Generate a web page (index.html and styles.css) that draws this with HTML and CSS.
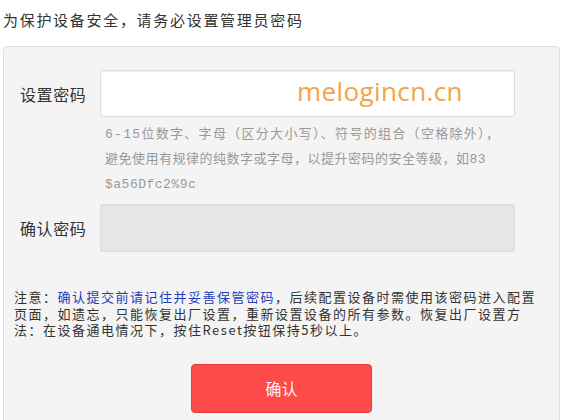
FILE: index.html
```html
<!DOCTYPE html>
<html lang="zh-CN">
<head>
    <meta charset="UTF-8">
    <title>设置管理员密码</title>
    <link rel="stylesheet" href="styles.css">
</head>
<body>
    <p class="tip">为保护设备安全，请务必设置管理员密码</p>

    <div class="panel">
        <div class="field">
            <label class="field-label">设置密码</label>
            <div class="field-box">
                <input class="text-input" type="password">
                <span class="watermark">melogincn.cn</span>
            </div>
        </div>

        <p class="hint"><span class="hint-wide">6-15位数字、字母（区分大小写）、符号的组合（空格除外），</span><br>避免使用有规律的纯数字或字母，以提升密码的安全等级，如83<br>$a56Dfc2%9c</p>

        <div class="field confirm">
            <label class="field-label">确认密码</label>
            <div class="field-box">
                <input class="text-input" type="password" disabled>
            </div>
        </div>

        <p class="note">注意：<span class="note-key">确认提交前请记住并妥善保管密码</span>，后续配置设备时需使用该密码进入配置<br>页面，如遗忘，只能恢复出厂设置，重新设置设备的所有参数。恢复出厂设置方<br>法：在设备通电情况下，按住Reset按钮保持5秒以上。</p>

        <div class="actions">
            <button class="btn-confirm" type="button">确认</button>
        </div>
    </div>
</body>
</html>
```

FILE: styles.css
```css
/* Basic reset */
* {
    margin: 0;
    padding: 0;
    box-sizing: border-box;
}

body {
    background-color: #fff;
    font-family: "Noto Sans CJK SC", "DejaVu Sans", sans-serif;
    color: #333;
}

/* Heading tip above the panel */
.tip {
    margin: 10px 0 0 3px;
    font-size: 15px;
    line-height: 20px;
    letter-spacing: 1.7px;
    color: #333;
}

/* Grey form panel */
.panel {
    margin: 16px 9px 0 3px;
    padding: 23px 0 30px;
    background-color: #f4f4f4;
    border: 1px solid #ddd;
    border-radius: 4px;
}

.field {
    display: flex;
    align-items: center;
    padding-left: 16px;
}

.field-label {
    width: 80px;
    font-size: 16px;
    letter-spacing: 0.6px;
    color: #333;
}

.field-box {
    position: relative;
}

.text-input {
    display: block;
    width: 415px;
    height: 47px;
    background-color: #fff;
    border: 1px solid #ddd;
    border-radius: 3px;
    box-shadow: inset 0 1px 2px rgba(0, 0, 0, 0.06);
    outline: none;
}

.text-input:disabled {
    background-color: #e6e6e6;
}

.confirm {
    margin-top: 7px;
}

.confirm .text-input {
    height: 48px;
}

/* Site watermark laid over the first input */
.watermark {
    position: absolute;
    left: 197px;
    top: 4px;
    font-family: "Open Sans", sans-serif;
    font-size: 26px;
    line-height: 34px;
    letter-spacing: 0.4px;
    color: #f2a545;
}

/* Password rules */
.hint {
    margin: 5px 0 0 101px;
    font-family: "Liberation Mono", "Noto Sans CJK SC", monospace;
    font-size: 13px;
    line-height: 25px;
    letter-spacing: 0.5px;
    color: #999;
}

.hint-wide {
    letter-spacing: 1.3px;
}

/* Warning note */
.note {
    margin-top: 37px;
    padding-left: 10px;
    font-size: 13px;
    line-height: 16.5px;
    letter-spacing: 1.5px;
    color: #333;
}

.note-key {
    color: #1f3dba;
}

.actions {
    display: flex;
    justify-content: center;
    margin-top: 25px;
}

.btn-confirm {
    width: 181px;
    height: 49px;
    background-color: #ff4a4a;
    border: 1px solid #e63b3b;
    border-radius: 4px;
    font-family: "Noto Sans CJK SC", sans-serif;
    font-size: 16px;
    color: #fff2f2;
    cursor: pointer;
}
```
